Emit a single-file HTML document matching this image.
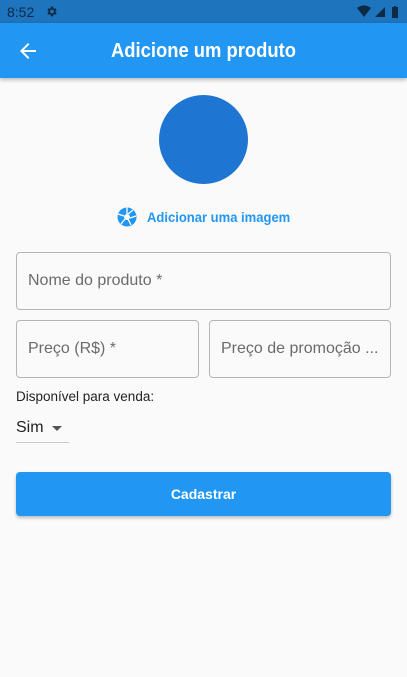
<!DOCTYPE html>
<html><head><style>
*{margin:0;padding:0;box-sizing:border-box}
body{width:407px;height:677px;background:#fafafa;font-family:"Liberation Sans",sans-serif;position:relative;overflow:hidden}
.abs{position:absolute}
.field{position:absolute;border:1px solid #b5b5b5;border-radius:4px;color:#6b6b6b;font-size:16px;padding-left:11px;display:flex;align-items:center;white-space:nowrap;overflow:hidden}
</style></head><body>
<div class="abs" style="left:0;top:0;width:407px;height:23px;background:#1e74bd"></div>
<div class="abs" style="left:7px;top:4px;font-size:14px;color:#0d2a45">8:52</div>
<svg class="abs" style="left:45px;top:5px" width="13" height="13" viewBox="0 0 24 24"><path fill="#0d2a45" d="M19.4 13a7.5 7.5 0 000-2l2.1-1.6-2-3.5-2.5 1a7 7 0 00-1.7-1L15 3h-4l-.4 2.9a7 7 0 00-1.7 1l-2.5-1-2 3.5L6.6 11a7.5 7.5 0 000 2l-2.1 1.6 2 3.5 2.5-1a7 7 0 001.7 1L11 21h4l.4-2.9a7 7 0 001.7-1l2.5 1 2-3.5zM13 15.5a3.5 3.5 0 110-7 3.5 3.5 0 010 7z"/></svg>
<svg class="abs" style="left:357px;top:5px" width="46" height="13" viewBox="0 0 46 13"><path fill="#0d2a45" d="M0 3Q7-2 14 3L7 12z M18 12L28 2V12z M35 2h2V1h2v1h2v11h-6z"/></svg>
<div class="abs" style="left:0;top:23px;width:407px;height:55px;background:#2196f3;box-shadow:0 2px 4px rgba(0,0,0,.25)"></div>
<svg class="abs" style="left:16px;top:39px" width="24" height="24" viewBox="0 0 24 24"><path fill="#fff" d="M20 11H7.8l5.6-5.6L12 4l-8 8 8 8 1.4-1.4L7.8 13H20z"/></svg>
<div class="abs" style="left:111px;top:40px;font-size:20px;color:#fff;font-weight:bold;transform:scaleX(0.92);transform-origin:left">Adicione um produto</div>
<div class="abs" style="left:159px;top:95px;width:89px;height:89px;border-radius:50%;background:#1e76d2"></div>
<svg class="abs" style="left:117px;top:207px" width="20" height="20" viewBox="0 0 20 20"><circle cx="10" cy="10" r="9.5" fill="#2196f3"/><path d="M10 .5V7M19 9L13 11M14 18L11 12M4 17L8 12M1 7L7 9M16 3L11 7" stroke="#fff" stroke-width="1.3"/><circle cx="10" cy="10" r="3" fill="#fff"/></svg>
<div class="abs" style="left:147px;top:209px;font-size:14px;color:#2196f3;font-weight:bold;transform:scaleX(0.93);transform-origin:left">Adicionar uma imagem</div>
<div class="field" style="left:16px;top:252px;width:375px;height:58px">Nome do produto *</div>
<div class="field" style="left:16px;top:320px;width:183px;height:58px">Preço (R$) *</div>
<div class="field" style="left:209px;top:320px;width:182px;height:58px">Preço de promoção ...</div>
<div class="abs" style="left:16px;top:389px;font-size:13.5px;color:#222">Disponível para venda:</div>
<div class="abs" style="left:16px;top:419px;font-size:16px;color:#222">Sim</div>
<div class="abs" style="left:52px;top:426px;border-left:5px solid transparent;border-right:5px solid transparent;border-top:5px solid #555"></div>
<div class="abs" style="left:16px;top:442px;width:53px;height:1px;background:#ccc"></div>
<div class="abs" style="left:16px;top:472px;width:375px;height:44px;background:#2196f3;border-radius:4px;box-shadow:0 2px 3px rgba(0,0,0,.25);color:#fff;font-weight:bold;font-size:14px;display:flex;align-items:center;justify-content:center">Cadastrar</div>
</body></html>
